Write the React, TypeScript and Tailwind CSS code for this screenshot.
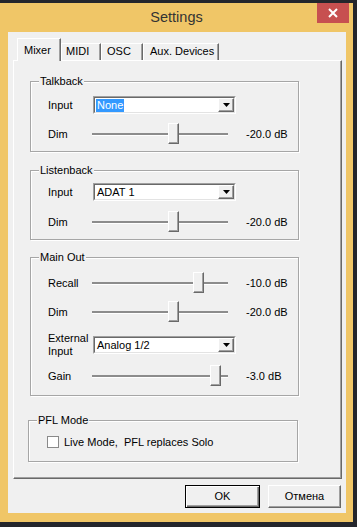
import { ReactNode } from "react";

type GroupProps = {
  title: string;
  className: string;
  children: ReactNode;
};

const Group = ({ title, className, children }: GroupProps) => (
  <div
    className={
      "border border-[#a6a6a6] shadow-[inset_1px_1px_0_#ffffff,1px_1px_0_#ffffff] " +
      className
    }
  >
    <div className="-mt-[7px] ml-[8px] w-fit bg-[#f0f0f0] px-[1px] leading-[13px]">
      {title}
    </div>
    {children}
  </div>
);

const Combo = ({ value, selected }: { value: string; selected?: boolean }) => (
  <div className="flex h-[18px] w-[143px] border border-t-[#a0a0a0] border-r-white border-b-white border-l-[#a0a0a0]">
    <div className="flex flex-1 border border-t-[#696969] border-r-[#e3e3e3] border-b-[#e3e3e3] border-l-[#696969] bg-white">
      <div className="flex flex-1 items-center pl-[1px]">
        <span
          className={
            selected
              ? "bg-[#3399ff] px-[1px] leading-[13px] text-white"
              : "px-[1px] leading-[13px]"
          }
        >
          {value}
        </span>
      </div>
      <div className="flex w-[16px] items-center justify-center border border-t-white border-r-[#696969] border-b-[#696969] border-l-white bg-[#f0f0f0] shadow-[inset_-1px_-1px_0_#a0a0a0]">
        <svg width="7" height="4" viewBox="0 0 7 4">
          <path d="M0 0h7L3.5 4z" fill="#000" />
        </svg>
      </div>
    </div>
  </div>
);

const Slider = ({ pos }: { pos: number }) => (
  <div className="relative flex h-[22px] w-[136px] items-center">
    <div className="-ml-px h-[3px] w-[136px] border-b border-white bg-[#8c8c8c]" />
    <div
      className="absolute top-0 h-[21px] w-[11px] border border-t-white border-r-[#696969] border-b-[#696969] border-l-white bg-[#f0f0f0] shadow-[inset_-1px_-1px_0_#a0a0a0]"
      style={{ left: pos }}
    />
  </div>
);

type SliderRowProps = {
  label: string;
  pos: number;
  value: string;
  className: string;
};

const SliderRow = ({ label, pos, value, className }: SliderRowProps) => (
  <div className={"flex h-[22px] items-center pl-[17px] " + className}>
    <div className="w-[45px] leading-[13px]">{label}</div>
    <Slider pos={pos} />
    <div className="ml-[17px] leading-[13px]">{value}</div>
  </div>
);

const ComboRow = ({ value, selected, className }: { value: string; selected?: boolean; className: string }) => (
  <div className={"flex h-[18px] items-center pl-[17px] " + className}>
    <div className="w-[45px] leading-[13px]">Input</div>
    <Combo value={value} selected={selected} />
  </div>
);

const tabs = [
  { name: "MIDI", cls: "w-[40px] pl-[4px]" },
  { name: "OSC", cls: "w-[42px] pl-[5px]" },
  { name: "Aux. Devices", cls: "w-[76px] pl-[6px]" },
];

export default function App() {
  return (
    <div className="flex h-[527px] w-[357px] flex-col bg-[#24262c] font-['Liberation_Sans',Arial,sans-serif] text-[11px] text-black">
      <div className="h-[3px]" />
      <div className="flex h-[519px] w-[353px] flex-col bg-[#f0c667]">
        {/* title bar */}
        <div className="grid h-[29px] grid-cols-[1fr_auto_1fr]">
          <div />
          <div className="self-center text-[14.5px] leading-none text-[#333333]">Settings</div>
          <div className="mr-[4px] flex h-[20px] w-[32px] items-center justify-center self-start justify-self-end bg-[#c75050]">
            <svg width="10" height="10" viewBox="0 0 10 10">
              <path d="M1 1l8 8M9 1l-8 8" stroke="#fff" strokeWidth="2" />
            </svg>
          </div>
        </div>

        {/* client */}
        <div className="ml-[8px] flex h-[481px] w-[338px] flex-col bg-[#f0f0f0]">
          <div className="mt-[6px] flex h-[22px] items-end pl-[9px]">
            <div className="relative z-10 -mb-px h-[23px] w-[44px] border-t border-r border-l border-t-white border-r-[#696969] border-l-white bg-[#f0f0f0] pt-[5px] pl-[6px] leading-[13px] shadow-[inset_-1px_0_0_#a0a0a0]">
              Mixer
            </div>
            {tabs.map((t) => (
              <div
                key={t.name}
                className={
                  "h-[17px] border-t border-r border-l border-t-white border-r-[#696969] border-l-white pt-[1px] leading-[13px] shadow-[inset_-1px_0_0_#a0a0a0] " +
                  t.cls
                }
              >
                {t.name}
              </div>
            ))}
          </div>

          <div className="ml-[5px] flex h-[419px] w-[329px] flex-col border border-t-white border-r-[#696969] border-b-[#696969] border-l-white shadow-[inset_-1px_-1px_0_#a0a0a0]">
            <Group title="Talkback" className="mt-[20px] ml-[16px] w-[269px] pb-[6px]">
              <ComboRow value="None" selected className="mt-[8px]" />
              <SliderRow label="Dim" pos={75} value="-20.0 dB" className="mt-[9px]" />
            </Group>

            <Group title="Listenback" className="mt-[18px] ml-[16px] w-[269px] pb-[6px]">
              <ComboRow value="ADAT 1" className="mt-[6px]" />
              <SliderRow label="Dim" pos={75} value="-20.0 dB" className="mt-[10px]" />
            </Group>

            <Group title="Main Out" className="mt-[17px] ml-[16px] w-[269px] pb-[8px]">
              <SliderRow label="Recall" pos={100} value="-10.0 dB" className="mt-[8px]" />
              <SliderRow label="Dim" pos={75} value="-20.0 dB" className="mt-[7px]" />
              <div className="mt-[9px] flex h-[26px] items-center pl-[17px]">
                <div className="w-[45px] leading-[13px]">
                  External
                  <br />
                  Input
                </div>
                <Combo value="Analog 1/2" />
              </div>
              <SliderRow label="Gain" pos={117} value="-3.0 dB" className="mt-[7px]" />
            </Group>

            <Group title="PFL Mode" className="mt-[24px] ml-[14px] w-[270px] pb-[13px]">
              <div className="mt-[9px] flex h-[12px] items-center pl-[18px]">
                <div className="h-[12px] w-[12px] border border-[#8a8a8a] bg-white" />
                <span className="ml-[5px] leading-[13px] whitespace-pre">Live Mode,  PFL replaces Solo</span>
              </div>
            </Group>
          </div>

          <div className="mt-[6px] flex justify-end gap-[8px] pr-[5px]">
            <button className="flex h-[23px] w-[75px] items-center justify-center border border-black bg-[#f0f0f0] shadow-[inset_1px_1px_0_#ffffff,inset_-1px_-1px_0_#696969,inset_-2px_-2px_0_#a0a0a0]">
              OK
            </button>
            <button className="flex h-[23px] w-[73px] items-center justify-center border border-t-white border-r-[#696969] border-b-[#696969] border-l-white bg-[#f0f0f0] shadow-[inset_-1px_-1px_0_#a0a0a0]">
              Отмена
            </button>
          </div>
        </div>
      </div>
    </div>
  );
}
